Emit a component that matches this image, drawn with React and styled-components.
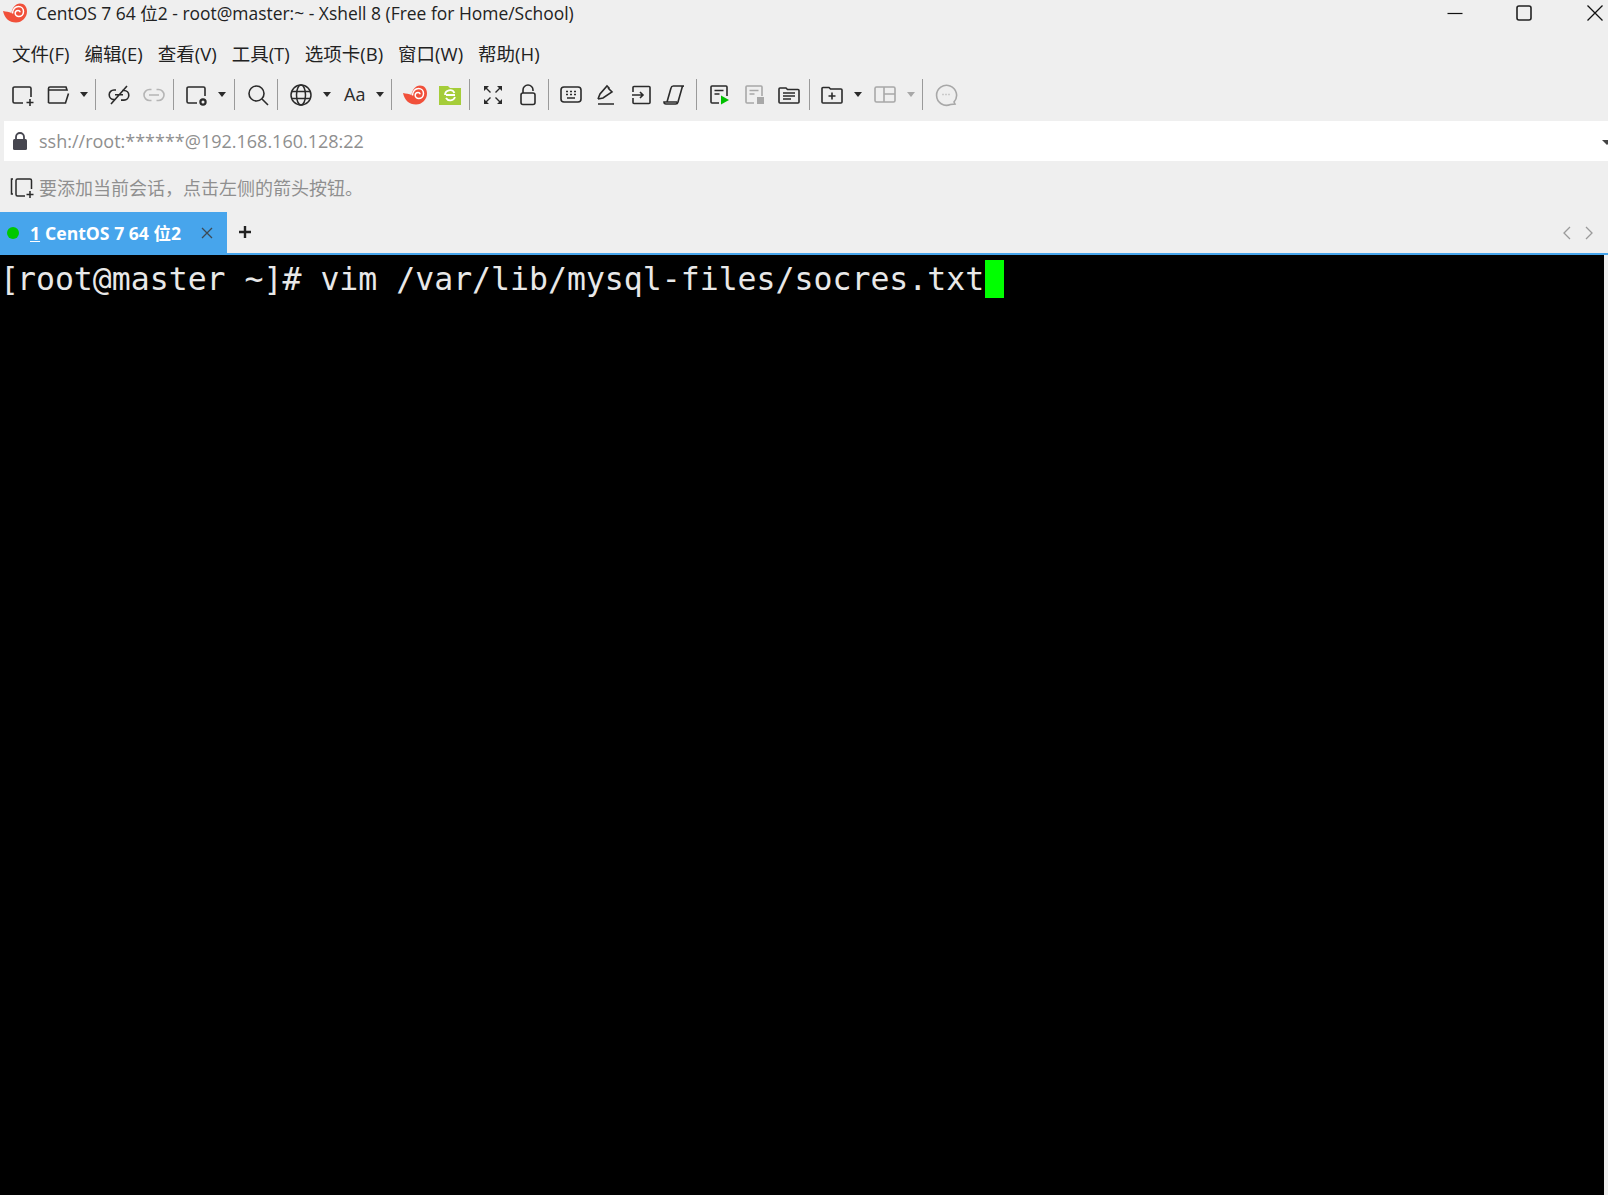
import React from "react";
import styled, { createGlobalStyle } from "styled-components";

const Global = createGlobalStyle`
  html, body { margin: 0; padding: 0; background: #efefef; }
  body { font-family: "Open Sans", "Noto Sans CJK SC", sans-serif; }
`;

const Ico = ({ w = 24, h = 24, children, color = "#2b2b2b", sw = 1.6 }) => (
  <svg width={w} height={h} viewBox={`0 0 ${w} ${h}`} fill="none" stroke={color} strokeWidth={sw}>
    {children}
  </svg>
);

const Logo = ({ w = 24, h = 20 }) => (
  <svg width={w} height={h} viewBox="0 0 24 20">
    <path d="M0 8c3 1 6 .5 8.500 2 .5-5 4-9.500 8.500-9.500 4.500 0 7 3.500 7 8 0 6-5 11-11 11C6 19.500 1.500 15 0 8z" fill="#f1503a" />
    <path d="M9.500 10.500C9.500 6 12.500 3.500 15.500 3.500c3 0 5 2.200 5 5 0 3-2.200 5-4.800 5-2 0-3.500-1.500-3.500-3.300 0-1.600 1.200-2.800 2.800-2.800 1.200 0 2 .9 2 1.900" fill="none" stroke="#fff" strokeWidth="1.500" />
  </svg>
);

const Window = styled.div`
  width: 1608px;
  height: 1195px;
  display: flex;
  flex-direction: column;
  background: #efefef;
  overflow: hidden;
`;

const TitleBar = styled.div`
  height: 26px;
  display: flex;
  align-items: center;
  padding-left: 3px;
  gap: 9px;
  font-size: 17.45px;
  color: #222;
`;

const TitleText = styled.span`
  padding-bottom: 2px;
`;

const WinButtons = styled.div`
  margin-left: auto;
  display: flex;
  align-items: center;
`;

const WinButton = styled.div`
  width: ${(p) => p.$w}px;
  display: flex;
  justify-content: ${(p) => (p.$end ? "flex-end" : "center")};
  padding-right: ${(p) => (p.$end ? 4 : 0)}px;
  box-sizing: border-box;
`;

const MenuBar = styled.div`
  height: 42px;
  padding: 11px 0 0 12px;
  box-sizing: border-box;
  display: flex;
  align-items: center;
  gap: 15px;
  font-size: 18.5px;
  color: #222;
`;

const Toolbar = styled.div`
  height: 53px;
  display: flex;
  align-items: center;
  padding-left: 10px;
`;

const Tool = styled.div`
  width: ${(p) => p.$w || 35}px;
  height: 30px;
  display: flex;
  align-items: center;
  flex: none;
`;

const Sep = styled.div`
  width: 1px;
  height: 31px;
  background: #9a9a9a;
  margin-right: ${(p) => p.$r || 10}px;
  flex: none;
`;

const Caret = styled.span`
  width: 0;
  height: 0;
  margin-left: ${(p) => p.$ml || 8}px;
  border-left: 4.5px solid transparent;
  border-right: 4.5px solid transparent;
  border-top: 5px solid ${(p) => p.$color || "#2b2b2b"};
`;

const AaLabel = styled.span`
  margin-left: 2px;
  padding-bottom: 2px;
  font-size: 18px;
  color: #2b2b2b;
`;

const AddressBar = styled.div`
  height: 40px;
  margin-left: 4px;
  background: #fff;
  display: flex;
  align-items: center;
  padding-left: 9px;
  gap: 12px;
  font-size: 18px;
  color: #8f8f8f;
  position: relative;
`;

const AddressCaret = styled.span`
  position: absolute;
  right: -4px;
  top: 19px;
  width: 0;
  height: 0;
  border-left: 5px solid transparent;
  border-right: 5px solid transparent;
  border-top: 5px solid #444;
`;

const HintBar = styled.div`
  height: 51px;
  display: flex;
  align-items: center;
  padding-left: 10px;
  gap: 3px;
  font-size: 18px;
  color: #8f8f8f;
`;

const TabBar = styled.div`
  height: 41px;
  display: flex;
  align-items: stretch;
  border-bottom: 2px solid #47a5ec;
`;

const Tab = styled.div`
  width: 227px;
  background: #47a5ec;
  display: flex;
  align-items: center;
  box-sizing: border-box;
  padding-left: 7px;
  color: #fff;
  font-weight: 700;
  font-size: 17.6px;
`;

const Dot = styled.span`
  width: 12px;
  height: 12px;
  border-radius: 50%;
  background: #00c800;
  margin-right: 11px;
`;

const TabNum = styled.span`
  text-decoration: underline;
  margin-right: 5px;
`;

const TabClose = styled.span`
  margin-left: auto;
  margin-right: 14px;
  display: flex;
`;

const AddTab = styled.div`
  width: 36px;
  padding-bottom: 2px;
  box-sizing: border-box;
  display: flex;
  align-items: center;
  justify-content: center;
`;

const TabNav = styled.div`
  margin-left: auto;
  display: flex;
  align-items: center;
  gap: 10px;
  padding-right: 13px;
`;

const Terminal = styled.div`
  flex: 1;
  width: 1604px;
  background: #000;
  color: #e8e8e8;
  font-family: "DejaVu Sans Mono", monospace;
  font-size: 31.5px;
  line-height: 38px;
  padding-top: 5px;
  white-space: pre;
  box-sizing: border-box;
`;

const Bracket = styled.span`
  margin-right: -2px;
`;

const Cursor = styled.span`
  display: inline-block;
  width: 19px;
  height: 38px;
  margin-left: 1px;
  background: #00ff00;
  vertical-align: top;
`;

const NewSession = () => (
  <Ico w={26} h={26}>
    <path d="M13 21H4.500a1.500 1.500 0 0 1-1.500-1.500V6.500A1.500 1.500 0 0 1 4.500 5h15A1.500 1.500 0 0 1 21 6.500V15" />
    <path d="M20 17v7M16.500 20.500h7" />
  </Ico>
);

const OpenFolder = () => (
  <Ico w={26} h={24}>
    <path d="M3.500 20V5.500A1.500 1.500 0 0 1 5 4h16l1 3H3.500" />
    <path d="M3.500 20h17l3-9.500" />
  </Ico>
);

const App = () => (
  <Window>
    <Global />
    <TitleBar>
      <Logo />
      <TitleText>CentOS 7 64 位2 - root@master:~ - Xshell 8 (Free for Home/School)</TitleText>
      <WinButtons>
        <WinButton $w={69}>
          <Ico w={16} h={16} color="#111" sw={1.2}><path d="M.5 8.500h15" /></Ico>
        </WinButton>
        <WinButton $w={69}>
          <Ico w={16} h={16} color="#222" sw={1.6}><rect x="1" y="1" width="14" height="14" rx="2" /></Ico>
        </WinButton>
        <WinButton $w={49.5} $end>
          <Ico w={18} h={18} color="#111" sw={1.3}><path d="M1.500 1.500l15 15M16.500 1.500l-15 15" /></Ico>
        </WinButton>
      </WinButtons>
    </TitleBar>

    <MenuBar>
      <span>文件(F)</span>
      <span>编辑(E)</span>
      <span>查看(V)</span>
      <span>工具(T)</span>
      <span>选项卡(B)</span>
      <span>窗口(W)</span>
      <span>帮助(H)</span>
    </MenuBar>

    <Toolbar>
      <Tool $w={35}><NewSession /></Tool>
      <Tool $w={50}><OpenFolder /><Caret $ml={9} /></Tool>
      <Sep $r={11} />
      <Tool $w={35}>
        <Ico w={24} h={24}>
          <path d="M9 7H7a4.800 4.800 0 0 0 0 9.600h1M15 7.500h2a4.800 4.800 0 0 1 0 9.600h-3M8 11.800h8M4 21L20 3" />
        </Ico>
      </Tool>
      <Tool $w={31}>
        <Ico w={24} h={24} color="#b5b5b5">
          <path d="M9.500 6.500H7.500a5.500 5.500 0 0 0 0 11h2M14.500 6.500h2a5.500 5.500 0 0 1 0 11h-2M7 12h10" />
        </Ico>
      </Tool>
      <Sep $r={10} />
      <Tool $w={50}>
        <Ico w={26} h={26}>
          <path d="M13 21H4.500A1.500 1.500 0 0 1 3 19.500V6.500A1.500 1.500 0 0 1 4.500 5h15A1.500 1.500 0 0 1 21 6.500V14" />
          <circle cx="19" cy="20" r="2.600" strokeWidth="2.200" />
        </Ico>
        <Caret $ml={8} />
      </Tool>
      <Sep $r={11} />
      <Tool $w={31}>
        <Ico w={24} h={24}>
          <circle cx="10.500" cy="10.500" r="7.500" />
          <path d="M16 16l6 6" />
        </Ico>
      </Tool>
      <Sep $r={11} />
      <Tool $w={53}>
        <Ico w={24} h={24} sw={1.500}>
          <circle cx="12" cy="12" r="10" />
          <ellipse cx="12" cy="12" rx="4.500" ry="10" />
          <path d="M2.500 8.500h19M2.500 15.500h19" />
        </Ico>
        <Caret $ml={10} />
      </Tool>
      <Tool $w={49}>
        <AaLabel>Aa</AaLabel>
        <Caret $ml={11} />
      </Tool>
      <Sep $r={11} />
      <Tool $w={36}><Logo /></Tool>
      <Tool $w={30}>
        <svg width="22" height="20" viewBox="0 0 22 20">
          <path d="M0 1h9l2 2h11v17H0z" fill="#a5cd39" />
          <path d="M6 10a5 5 0 0 1 9.500-2M16 10H7M16 12a5 5 0 0 1-9 1" fill="none" stroke="#fff" strokeWidth="1.800" />
        </svg>
      </Tool>
      <Sep $r={13} />
      <Tool $w={36}>
        <Ico w={20} h={20} sw={1.400}>
          <path d="M1 1h5L1 6zM19 1h-5l5 5zM1 19h5l-5-5zM19 19h-5l5-5z" fill="#2b2b2b" stroke="none" />
          <path d="M3 3l4.500 4.500M17 3l-4.500 4.500M3 17l4.500-4.500M17 17l-4.500-4.500" />
        </Ico>
      </Tool>
      <Tool $w={29}>
        <Ico w={18} h={22}>
          <rect x="2" y="9" width="14" height="11.500" rx="2" />
          <path d="M4 9V6a5 5 0 0 1 10 0v1" />
        </Ico>
      </Tool>
      <Sep $r={11} />
      <Tool $w={35}>
        <Ico w={22} h={20}>
          <rect x="1" y="2" width="20" height="15" rx="3" />
          <path d="M6 6.500h2M10 6.500h2M14 6.500h2M6 9.500h2M10 9.500h2M14 9.500h2M7 13h8" />
        </Ico>
      </Tool>
      <Tool $w={36}>
        <Ico w={20} h={22}>
          <path d="M3 15l2-5 7-8 2.500 2.500M3 15l5-1 9-6-4-4M3 20h16" />
        </Ico>
      </Tool>
      <Tool $w={32}>
        <Ico w={22} h={22}>
          <path d="M2 8V3.500A1 1 0 0 1 3 2.500h15a1 1 0 0 1 1 1v15a1 1 0 0 1-1 1H3a1 1 0 0 1-1-1V14M1 11h11M9 8l3 3-3 3" />
        </Ico>
      </Tool>
      <Tool $w={33}>
        <Ico w={24} h={22}>
          <path d="M4 18l4-14a2.500 2.500 0 0 1 2.500-2H21a2 2 0 0 0-2 2l-4 14a2.500 2.500 0 0 1-2.500 2H3a2 2 0 0 1-2-2h13" />
        </Ico>
      </Tool>
      <Sep $r={12} />
      <Tool $w={35}>
        <svg width="22" height="22" viewBox="0 0 22 22" fill="none" stroke="#2b2b2b" strokeWidth="1.600">
          <path d="M10 19H3a1 1 0 0 1-1-1V3a1 1 0 0 1 1-1h14a1 1 0 0 1 1 1v9" />
          <path d="M5.500 6.500h9M5.500 10h5" />
          <path d="M12 11.500v9l8-4.500z" fill="#00c000" stroke="none" />
        </svg>
      </Tool>
      <Tool $w={34}>
        <svg width="22" height="22" viewBox="0 0 22 22" fill="none" stroke="#a8a8a8" strokeWidth="1.600">
          <path d="M10 19H3a1 1 0 0 1-1-1V3a1 1 0 0 1 1-1h14a1 1 0 0 1 1 1v9" />
          <path d="M5.500 6.500h9M5.500 10h5" />
          <rect x="13" y="13" width="7" height="7" fill="#a8a8a8" stroke="none" />
        </svg>
      </Tool>
      <Tool $w={31}>
        <Ico w={22} h={20}>
          <path d="M1 4a1 1 0 0 1 1-1h6l1.500 1.500H20a1 1 0 0 1 1 1V17a1 1 0 0 1-1 1H2a1 1 0 0 1-1-1z" />
          <path d="M5 8h12M5 11h12M5 14h8" />
        </Ico>
      </Tool>
      <Sep $r={11} />
      <Tool $w={53}>
        <Ico w={22} h={20}>
          <path d="M1 3.500a1 1 0 0 1 1-1h6L9.500 4H20a1 1 0 0 1 1 1v12a1 1 0 0 1-1 1H2a1 1 0 0 1-1-1z" />
          <path d="M11 7.500v7M7.500 11h7" />
        </Ico>
        <Caret $ml={11} />
      </Tool>
      <Tool $w={48}>
        <Ico w={22} h={20} color="#a8a8a8">
          <rect x="1" y="2" width="20" height="15" rx="1.500" />
          <path d="M10 2v15M10 9h11" />
        </Ico>
        <Caret $ml={11} $color="#a8a8a8" />
      </Tool>
      <Sep $r={11} />
      <Tool $w={30}>
        <svg width="24" height="24" viewBox="0 0 24 24" fill="none" stroke="#a8a8a8" strokeWidth="1.600">
          <path d="M21 21l-1-2a10 10 0 1 0-3.500 2.500z" />
          <path d="M8.500 11.500h1M11.500 11.500h1M14.500 11.500h1" />
        </svg>
      </Tool>
    </Toolbar>

    <AddressBar>
      <svg width="14" height="18" viewBox="0 0 14 18">
        <rect x="0" y="7" width="14" height="11" rx="1.500" fill="#46464f" />
        <path d="M3 7V5a4 4 0 0 1 8 0v2" fill="none" stroke="#46464f" strokeWidth="1.800" />
      </svg>
      <span>ssh://root:******@192.168.160.128:22</span>
      <AddressCaret />
    </AddressBar>

    <HintBar>
      <Ico w={26} h={24} sw={1.500}>
        <path d="M3 4H1.500v15H3M15 21H7.500A1.500 1.500 0 0 1 6 19.500V5.500A1.500 1.500 0 0 1 7.500 4H20a1.500 1.500 0 0 1 1.500 1.500V14" />
        <path d="M20 16v7M16.500 19.500h7" />
      </Ico>
      <span>要添加当前会话，点击左侧的箭头按钮。</span>
    </HintBar>

    <TabBar>
      <Tab>
        <Dot />
        <TabNum>1</TabNum>
        <span>CentOS 7 64 位2</span>
        <TabClose>
          <Ico w={12} h={12} color="#3d4a55" sw={1.300}><path d="M1 1l10 10M11 1L1 11" /></Ico>
        </TabClose>
      </Tab>
      <AddTab>
        <Ico w={12} h={12} color="#222" sw={2.400}><path d="M6 0v12M0 6h12" /></Ico>
      </AddTab>
      <TabNav>
        <Ico w={12} h={16} color="#9a9a9a" sw={1.300}><path d="M9 2L3 8l6 6" /></Ico>
        <Ico w={12} h={16} color="#9a9a9a" sw={1.300}><path d="M3 2l6 6-6 6" /></Ico>
      </TabNav>
    </TabBar>

    <Terminal>
      <Bracket>[</Bracket>root@master ~]# vim /var/lib/mysql-files/socres.txt<Cursor />
    </Terminal>
  </Window>
);

export default App;
